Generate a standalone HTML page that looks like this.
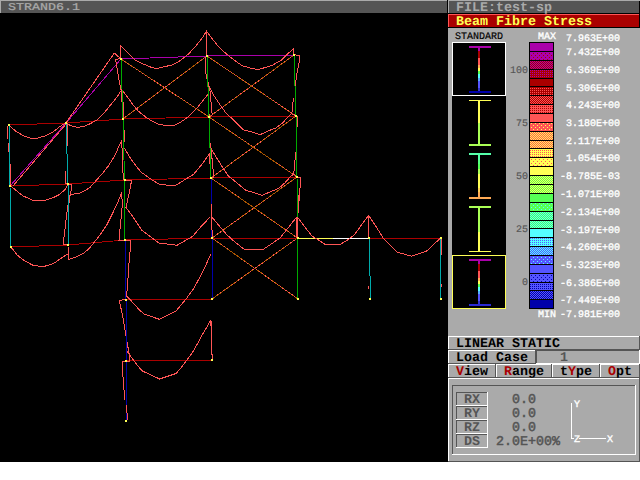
<!DOCTYPE html>
<html><head><meta charset="utf-8"><title>STRAND6.1</title>
<style>html,body{margin:0;padding:0;background:#fff;overflow:hidden}svg{display:block}
text{font-family:"Liberation Mono",monospace;white-space:pre}</style></head>
<body><svg width="640" height="480" viewBox="0 0 640 480" shape-rendering="crispEdges">
<defs><pattern id="p1" width="4" height="4" patternUnits="userSpaceOnUse"><rect x="1" y="1" width="1" height="1" fill="#AA0000"/><rect x="3" y="3" width="1" height="1" fill="#AA0000"/></pattern><pattern id="p2" width="2" height="2" patternUnits="userSpaceOnUse"><rect x="0" y="0" width="1" height="1" fill="#AA0000"/><rect x="1" y="1" width="1" height="1" fill="#AA0000"/></pattern><pattern id="p3" width="2" height="2" patternUnits="userSpaceOnUse"><rect x="0" y="0" width="1" height="1" fill="#AA00AA"/></pattern><pattern id="p5" width="2" height="2" patternUnits="userSpaceOnUse"><rect x="0" y="0" width="1" height="1" fill="#FF5555"/></pattern><pattern id="p6" width="2" height="2" patternUnits="userSpaceOnUse"><rect x="0" y="0" width="1" height="1" fill="#FF5555"/><rect x="1" y="1" width="1" height="1" fill="#FF5555"/></pattern><pattern id="p7" width="2" height="2" patternUnits="userSpaceOnUse"><rect x="0" y="0" width="1" height="1" fill="#AA0000"/></pattern><pattern id="p9" width="4" height="4" patternUnits="userSpaceOnUse"><rect x="1" y="1" width="1" height="1" fill="#FFFF55"/><rect x="3" y="3" width="1" height="1" fill="#FFFF55"/></pattern><pattern id="p10" width="2" height="2" patternUnits="userSpaceOnUse"><rect x="0" y="0" width="1" height="1" fill="#FFFF55"/><rect x="1" y="1" width="1" height="1" fill="#FFFF55"/></pattern><pattern id="p11" width="2" height="2" patternUnits="userSpaceOnUse"><rect x="0" y="0" width="1" height="1" fill="#FF5555"/><rect x="1" y="1" width="1" height="1" fill="#FF5555"/></pattern><pattern id="p12" width="2" height="2" patternUnits="userSpaceOnUse"><rect x="0" y="0" width="1" height="1" fill="#FF5555"/></pattern><pattern id="p13" width="4" height="4" patternUnits="userSpaceOnUse"><rect x="1" y="1" width="1" height="1" fill="#FF5555"/><rect x="3" y="3" width="1" height="1" fill="#FF5555"/></pattern><pattern id="p15" width="2" height="2" patternUnits="userSpaceOnUse"><rect x="0" y="0" width="1" height="1" fill="#55FF55"/><rect x="1" y="1" width="1" height="1" fill="#55FF55"/></pattern><pattern id="p16" width="2" height="2" patternUnits="userSpaceOnUse"><rect x="0" y="0" width="1" height="1" fill="#FFFF55"/><rect x="1" y="1" width="1" height="1" fill="#FFFF55"/></pattern><pattern id="p18" width="4" height="4" patternUnits="userSpaceOnUse"><rect x="1" y="1" width="1" height="1" fill="#55FFFF"/><rect x="3" y="3" width="1" height="1" fill="#55FFFF"/></pattern><pattern id="p19" width="2" height="2" patternUnits="userSpaceOnUse"><rect x="0" y="0" width="1" height="1" fill="#55FFFF"/><rect x="1" y="1" width="1" height="1" fill="#55FFFF"/></pattern><pattern id="p20" width="2" height="2" patternUnits="userSpaceOnUse"><rect x="0" y="0" width="1" height="1" fill="#55FF55"/><rect x="1" y="1" width="1" height="1" fill="#55FF55"/></pattern><pattern id="p22" width="2" height="2" patternUnits="userSpaceOnUse"><rect x="0" y="0" width="1" height="1" fill="#5555FF"/></pattern><pattern id="p23" width="2" height="2" patternUnits="userSpaceOnUse"><rect x="0" y="0" width="1" height="1" fill="#55FFFF"/><rect x="1" y="1" width="1" height="1" fill="#55FFFF"/></pattern><pattern id="p24" width="4" height="4" patternUnits="userSpaceOnUse"><rect x="1" y="1" width="1" height="1" fill="#55FFFF"/><rect x="3" y="3" width="1" height="1" fill="#55FFFF"/></pattern><pattern id="p26" width="4" height="4" patternUnits="userSpaceOnUse"><rect x="1" y="1" width="1" height="1" fill="#0000AA"/><rect x="3" y="3" width="1" height="1" fill="#0000AA"/></pattern><pattern id="p27" width="2" height="2" patternUnits="userSpaceOnUse"><rect x="0" y="0" width="1" height="1" fill="#0000AA"/></pattern><pattern id="p28" width="2" height="2" patternUnits="userSpaceOnUse"><rect x="0" y="0" width="1" height="1" fill="#5555FF"/><rect x="1" y="1" width="1" height="1" fill="#5555FF"/></pattern></defs>
<rect x="0" y="0" width="640" height="480" fill="#FFFFFF"/>
<rect x="0" y="0" width="448" height="462" fill="#000000"/>
<rect x="0" y="0" width="447" height="13" fill="#555555"/>
<rect x="0" y="0" width="447" height="1" fill="#AAAAAA"/>
<rect x="0" y="0" width="1" height="13" fill="#AAAAAA"/>
<rect x="448" y="0" width="192" height="462" fill="#AAAAAA"/>
<rect x="449" y="0" width="191" height="13" fill="#555555"/>
<rect x="448" y="0" width="192" height="1" fill="#AAAAAA"/>
<rect x="448" y="0" width="1" height="13" fill="#AAAAAA"/>
<rect x="448" y="13" width="192" height="1" fill="#000000"/>
<rect x="448" y="14" width="192" height="13" fill="#AA0000"/>
<rect x="448" y="14" width="192" height="1" fill="#FF5555"/>
<rect x="448" y="14" width="1" height="13" fill="#FF5555"/>
<rect x="639" y="1" width="1" height="27" fill="#000000"/>
<rect x="448" y="27" width="192" height="1" fill="#000000"/>
<rect x="452" y="42" width="54" height="267" fill="#000000"/>
<rect x="452" y="42" width="54" height="1" fill="#FFFFFF"/>
<rect x="452" y="95" width="54" height="1" fill="#FFFFFF"/>
<rect x="452" y="42" width="1" height="54" fill="#FFFFFF"/>
<rect x="505" y="42" width="1" height="54" fill="#FFFFFF"/>
<rect x="452" y="255" width="54" height="1" fill="#FFFF55"/>
<rect x="452" y="308" width="54" height="1" fill="#FFFF55"/>
<rect x="452" y="255" width="1" height="54" fill="#FFFF55"/>
<rect x="505" y="255" width="1" height="54" fill="#FFFF55"/>
<rect x="469" y="46" width="22" height="2" fill="#AA00AA"/>
<rect x="469" y="91" width="22" height="2" fill="#0000AA"/>
<rect x="478" y="48" width="2" height="3" fill="#AA00AA"/>
<rect x="478" y="51" width="2" height="4" fill="#AA0000"/>
<rect x="478" y="55" width="2" height="3" fill="#AA0000"/>
<rect x="478" y="58" width="2" height="3" fill="#FF5555"/>
<rect x="478" y="61" width="2" height="4" fill="#FF5555"/>
<rect x="478" y="65" width="2" height="3" fill="#FFAA55"/>
<rect x="478" y="68" width="2" height="3" fill="#FFFF55"/>
<rect x="478" y="71" width="2" height="3" fill="#55FF55"/>
<rect x="478" y="74" width="2" height="4" fill="#55FFFF"/>
<rect x="478" y="78" width="2" height="3" fill="#55AAFF"/>
<rect x="478" y="81" width="2" height="3" fill="#5555FF"/>
<rect x="478" y="84" width="2" height="4" fill="#5555FF"/>
<rect x="478" y="88" width="2" height="3" fill="#3333CC"/>
<rect x="469" y="100" width="22" height="1" fill="#FFFF55"/>
<rect x="469" y="144" width="22" height="2" fill="#AAFF55"/>
<rect x="478" y="101" width="2" height="4" fill="#FFFF55"/>
<rect x="478" y="105" width="2" height="5" fill="#FFFF55"/>
<rect x="478" y="110" width="2" height="4" fill="#FFFF55"/>
<rect x="478" y="114" width="2" height="4" fill="#FFFF55"/>
<rect x="478" y="118" width="2" height="5" fill="#FFFF55"/>
<rect x="478" y="123" width="2" height="4" fill="#AAFF55"/>
<rect x="478" y="127" width="2" height="4" fill="#AAFF55"/>
<rect x="478" y="131" width="2" height="4" fill="#AAFF55"/>
<rect x="478" y="135" width="2" height="5" fill="#AAFF55"/>
<rect x="478" y="140" width="2" height="4" fill="#AAFF55"/>
<rect x="469" y="153" width="22" height="2" fill="#55FFAA"/>
<rect x="469" y="197" width="22" height="2" fill="#FFAA55"/>
<rect x="478" y="155" width="2" height="5" fill="#55FFAA"/>
<rect x="478" y="160" width="2" height="4" fill="#55FF80"/>
<rect x="478" y="164" width="2" height="5" fill="#55FF55"/>
<rect x="478" y="169" width="2" height="5" fill="#AAFF55"/>
<rect x="478" y="174" width="2" height="4" fill="#FFFF55"/>
<rect x="478" y="178" width="2" height="5" fill="#FFFF55"/>
<rect x="478" y="183" width="2" height="5" fill="#FFFF55"/>
<rect x="478" y="188" width="2" height="4" fill="#FFD055"/>
<rect x="478" y="192" width="2" height="5" fill="#FFAA55"/>
<rect x="469" y="206" width="22" height="2" fill="#AAFF55"/>
<rect x="469" y="251" width="22" height="1" fill="#FFFF55"/>
<rect x="478" y="208" width="2" height="5" fill="#AAFF55"/>
<rect x="478" y="213" width="2" height="5" fill="#AAFF55"/>
<rect x="478" y="218" width="2" height="4" fill="#AAFF55"/>
<rect x="478" y="222" width="2" height="5" fill="#AAFF55"/>
<rect x="478" y="227" width="2" height="5" fill="#AAFF55"/>
<rect x="478" y="232" width="2" height="5" fill="#FFFF55"/>
<rect x="478" y="237" width="2" height="4" fill="#FFFF55"/>
<rect x="478" y="241" width="2" height="5" fill="#FFFF55"/>
<rect x="478" y="246" width="2" height="5" fill="#FFFF55"/>
<rect x="469" y="259" width="22" height="2" fill="#AA00AA"/>
<rect x="469" y="304" width="22" height="2" fill="#2A2AD4"/>
<rect x="478" y="261" width="2" height="3" fill="#AA00AA"/>
<rect x="478" y="264" width="2" height="4" fill="#AA0000"/>
<rect x="478" y="268" width="2" height="3" fill="#AA0000"/>
<rect x="478" y="271" width="2" height="3" fill="#FF5555"/>
<rect x="478" y="274" width="2" height="4" fill="#FF5555"/>
<rect x="478" y="278" width="2" height="3" fill="#FFAA55"/>
<rect x="478" y="281" width="2" height="3" fill="#FFFF55"/>
<rect x="478" y="284" width="2" height="3" fill="#55FF55"/>
<rect x="478" y="287" width="2" height="4" fill="#55FFFF"/>
<rect x="478" y="291" width="2" height="3" fill="#55AAFF"/>
<rect x="478" y="294" width="2" height="3" fill="#5555FF"/>
<rect x="478" y="297" width="2" height="4" fill="#5555FF"/>
<rect x="478" y="301" width="2" height="3" fill="#3333CC"/>
<rect x="529" y="42" width="25" height="267" fill="#000000"/>
<rect x="530" y="43" width="23" height="8" fill="#AA00AA"/>
<rect x="530" y="52" width="23" height="8" fill="#AA00AA"/>
<rect x="530" y="52" width="23" height="8" fill="url(#p1)"/>
<rect x="530" y="61" width="23" height="8" fill="#AA00AA"/>
<rect x="530" y="61" width="23" height="8" fill="url(#p2)"/>
<rect x="530" y="70" width="23" height="8" fill="#AA0000"/>
<rect x="530" y="70" width="23" height="8" fill="url(#p3)"/>
<rect x="530" y="79" width="23" height="7" fill="#AA0000"/>
<rect x="530" y="87" width="23" height="8" fill="#AA0000"/>
<rect x="530" y="87" width="23" height="8" fill="url(#p5)"/>
<rect x="530" y="96" width="23" height="8" fill="#AA0000"/>
<rect x="530" y="96" width="23" height="8" fill="url(#p6)"/>
<rect x="530" y="105" width="23" height="8" fill="#FF5555"/>
<rect x="530" y="105" width="23" height="8" fill="url(#p7)"/>
<rect x="530" y="114" width="23" height="8" fill="#FF5555"/>
<rect x="530" y="123" width="23" height="8" fill="#FF5555"/>
<rect x="530" y="123" width="23" height="8" fill="url(#p9)"/>
<rect x="530" y="132" width="23" height="8" fill="#FF5555"/>
<rect x="530" y="132" width="23" height="8" fill="url(#p10)"/>
<rect x="530" y="141" width="23" height="7" fill="#FFFF55"/>
<rect x="530" y="141" width="23" height="7" fill="url(#p11)"/>
<rect x="530" y="149" width="23" height="8" fill="#FFFF55"/>
<rect x="530" y="149" width="23" height="8" fill="url(#p12)"/>
<rect x="530" y="158" width="23" height="8" fill="#FFFF55"/>
<rect x="530" y="158" width="23" height="8" fill="url(#p13)"/>
<rect x="530" y="167" width="23" height="8" fill="#FFFF55"/>
<rect x="530" y="176" width="23" height="8" fill="#FFFF55"/>
<rect x="530" y="176" width="23" height="8" fill="url(#p15)"/>
<rect x="530" y="185" width="23" height="8" fill="#55FF55"/>
<rect x="530" y="185" width="23" height="8" fill="url(#p16)"/>
<rect x="530" y="194" width="23" height="8" fill="#55FF55"/>
<rect x="530" y="203" width="23" height="8" fill="#55FF55"/>
<rect x="530" y="203" width="23" height="8" fill="url(#p18)"/>
<rect x="530" y="212" width="23" height="8" fill="#55FF55"/>
<rect x="530" y="212" width="23" height="8" fill="url(#p19)"/>
<rect x="530" y="221" width="23" height="7" fill="#55FFFF"/>
<rect x="530" y="221" width="23" height="7" fill="url(#p20)"/>
<rect x="530" y="229" width="23" height="8" fill="#55FFFF"/>
<rect x="530" y="238" width="23" height="8" fill="#55FFFF"/>
<rect x="530" y="238" width="23" height="8" fill="url(#p22)"/>
<rect x="530" y="247" width="23" height="8" fill="#5555FF"/>
<rect x="530" y="247" width="23" height="8" fill="url(#p23)"/>
<rect x="530" y="256" width="23" height="8" fill="#5555FF"/>
<rect x="530" y="256" width="23" height="8" fill="url(#p24)"/>
<rect x="530" y="265" width="23" height="8" fill="#5555FF"/>
<rect x="530" y="274" width="23" height="8" fill="#5555FF"/>
<rect x="530" y="274" width="23" height="8" fill="url(#p26)"/>
<rect x="530" y="283" width="23" height="7" fill="#5555FF"/>
<rect x="530" y="283" width="23" height="7" fill="url(#p27)"/>
<rect x="530" y="291" width="23" height="8" fill="#0000AA"/>
<rect x="530" y="291" width="23" height="8" fill="url(#p28)"/>
<rect x="530" y="300" width="23" height="8" fill="#0000AA"/>
<rect x="448" y="336" width="192" height="1" fill="#FFFFFF"/>
<rect x="448" y="336" width="1" height="14" fill="#FFFFFF"/>
<rect x="448" y="349" width="192" height="1" fill="#555555"/>
<rect x="639" y="336" width="1" height="14" fill="#555555"/>
<rect x="448" y="350" width="88" height="1" fill="#FFFFFF"/>
<rect x="448" y="350" width="1" height="14" fill="#FFFFFF"/>
<rect x="448" y="363" width="88" height="1" fill="#555555"/>
<rect x="535" y="350" width="1" height="14" fill="#555555"/>
<rect x="536" y="350" width="104" height="1" fill="#555555"/>
<rect x="536" y="350" width="1" height="14" fill="#555555"/>
<rect x="536" y="363" width="104" height="1" fill="#FFFFFF"/>
<rect x="639" y="350" width="1" height="14" fill="#FFFFFF"/>
<rect x="448" y="364" width="48" height="1" fill="#FFFFFF"/>
<rect x="448" y="364" width="1" height="14" fill="#FFFFFF"/>
<rect x="448" y="377" width="48" height="1" fill="#555555"/>
<rect x="495" y="364" width="1" height="14" fill="#555555"/>
<rect x="496" y="364" width="56" height="1" fill="#FFFFFF"/>
<rect x="496" y="364" width="1" height="14" fill="#FFFFFF"/>
<rect x="496" y="377" width="56" height="1" fill="#555555"/>
<rect x="551" y="364" width="1" height="14" fill="#555555"/>
<rect x="552" y="364" width="48" height="1" fill="#FFFFFF"/>
<rect x="552" y="364" width="1" height="14" fill="#FFFFFF"/>
<rect x="552" y="377" width="48" height="1" fill="#555555"/>
<rect x="599" y="364" width="1" height="14" fill="#555555"/>
<rect x="600" y="364" width="40" height="1" fill="#FFFFFF"/>
<rect x="600" y="364" width="1" height="14" fill="#FFFFFF"/>
<rect x="600" y="377" width="40" height="1" fill="#555555"/>
<rect x="639" y="364" width="1" height="14" fill="#555555"/>
<rect x="448" y="378" width="192" height="1" fill="#FFFFFF"/>
<rect x="448" y="378" width="1" height="84" fill="#FFFFFF"/>
<rect x="448" y="461" width="192" height="1" fill="#555555"/>
<rect x="639" y="378" width="1" height="84" fill="#555555"/>
<rect x="452" y="385" width="184" height="1" fill="#555555"/>
<rect x="452" y="385" width="1" height="70" fill="#555555"/>
<rect x="452" y="454" width="184" height="1" fill="#FFFFFF"/>
<rect x="635" y="385" width="1" height="70" fill="#FFFFFF"/>
<rect x="456" y="392" width="32" height="1" fill="#555555"/>
<rect x="456" y="392" width="1" height="14" fill="#555555"/>
<rect x="456" y="405" width="32" height="1" fill="#FFFFFF"/>
<rect x="487" y="392" width="1" height="14" fill="#FFFFFF"/>
<rect x="456" y="406" width="32" height="1" fill="#555555"/>
<rect x="456" y="406" width="1" height="14" fill="#555555"/>
<rect x="456" y="419" width="32" height="1" fill="#FFFFFF"/>
<rect x="487" y="406" width="1" height="14" fill="#FFFFFF"/>
<rect x="456" y="420" width="32" height="1" fill="#555555"/>
<rect x="456" y="420" width="1" height="14" fill="#555555"/>
<rect x="456" y="433" width="32" height="1" fill="#FFFFFF"/>
<rect x="487" y="420" width="1" height="14" fill="#FFFFFF"/>
<rect x="456" y="434" width="32" height="1" fill="#555555"/>
<rect x="456" y="434" width="1" height="14" fill="#555555"/>
<rect x="456" y="447" width="32" height="1" fill="#FFFFFF"/>
<rect x="487" y="434" width="1" height="14" fill="#FFFFFF"/>
<rect x="571" y="403" width="1" height="36" fill="#FFFFFF"/>
<rect x="571" y="438" width="3" height="1" fill="#FFFFFF"/>
<rect x="579" y="438" width="27" height="1" fill="#FFFFFF"/>
<line x1="121" y1="59" x2="209" y2="117" stroke="#AA5500" stroke-width="1"/>
<line x1="121" y1="59" x2="209" y2="117" stroke="#FF5555" stroke-width="1" stroke-dasharray="1.2 2.4"/>
<line x1="207" y1="56" x2="123" y2="119" stroke="#AA5500" stroke-width="1"/>
<line x1="207" y1="56" x2="123" y2="119" stroke="#FF5555" stroke-width="1" stroke-dasharray="1.2 2.4"/>
<line x1="207" y1="56" x2="296" y2="116" stroke="#AA5500" stroke-width="1"/>
<line x1="207" y1="56" x2="296" y2="116" stroke="#FF5555" stroke-width="1" stroke-dasharray="1.2 2.4"/>
<line x1="294" y1="55" x2="209" y2="117" stroke="#AA5500" stroke-width="1"/>
<line x1="294" y1="55" x2="209" y2="117" stroke="#FF5555" stroke-width="1" stroke-dasharray="1.2 2.4"/>
<line x1="209" y1="117" x2="297" y2="177" stroke="#AA5500" stroke-width="1"/>
<line x1="209" y1="117" x2="297" y2="177" stroke="#FF5555" stroke-width="1" stroke-dasharray="1.2 2.4"/>
<line x1="296" y1="116" x2="211" y2="178" stroke="#AA5500" stroke-width="1"/>
<line x1="296" y1="116" x2="211" y2="178" stroke="#FF5555" stroke-width="1" stroke-dasharray="1.2 2.4"/>
<line x1="211" y1="178" x2="297.5" y2="238" stroke="#AA5500" stroke-width="1"/>
<line x1="211" y1="178" x2="297.5" y2="238" stroke="#FF5555" stroke-width="1" stroke-dasharray="1.2 2.4"/>
<line x1="297" y1="177" x2="212" y2="238" stroke="#AA5500" stroke-width="1"/>
<line x1="297" y1="177" x2="212" y2="238" stroke="#FF5555" stroke-width="1" stroke-dasharray="1.2 2.4"/>
<line x1="212" y1="238" x2="298" y2="299" stroke="#AA5500" stroke-width="1"/>
<line x1="212" y1="238" x2="298" y2="299" stroke="#FF5555" stroke-width="1" stroke-dasharray="1.2 2.4"/>
<line x1="297.5" y1="238" x2="212" y2="299" stroke="#AA5500" stroke-width="1"/>
<line x1="297.5" y1="238" x2="212" y2="299" stroke="#FF5555" stroke-width="1" stroke-dasharray="1.2 2.4"/>
<line x1="9" y1="125" x2="66" y2="123" stroke="#AA0000" stroke-width="1"/>
<line x1="66" y1="123" x2="123" y2="119" stroke="#AA0000" stroke-width="1"/>
<line x1="123" y1="119" x2="209" y2="117" stroke="#AA0000" stroke-width="1"/>
<line x1="209" y1="117" x2="296" y2="116" stroke="#AA0000" stroke-width="1"/>
<line x1="10" y1="186" x2="68" y2="184" stroke="#AA0000" stroke-width="1"/>
<line x1="68" y1="184" x2="124.5" y2="180" stroke="#AA0000" stroke-width="1"/>
<line x1="124.5" y1="180" x2="211" y2="178" stroke="#AA0000" stroke-width="1"/>
<line x1="211" y1="178" x2="297" y2="177" stroke="#AA0000" stroke-width="1"/>
<line x1="10.75" y1="247" x2="68" y2="245" stroke="#AA0000" stroke-width="1"/>
<line x1="68" y1="245" x2="125" y2="240" stroke="#AA0000" stroke-width="1"/>
<line x1="125" y1="240" x2="212" y2="238" stroke="#AA0000" stroke-width="1"/>
<line x1="212" y1="238" x2="297.5" y2="238" stroke="#AA0000" stroke-width="1"/>
<line x1="369" y1="238" x2="441" y2="238" stroke="#AA0000" stroke-width="1"/>
<line x1="126" y1="300" x2="212" y2="299" stroke="#AA0000" stroke-width="1"/>
<line x1="126" y1="361" x2="212" y2="360" stroke="#AA0000" stroke-width="1"/>
<line x1="297.5" y1="238" x2="333" y2="238" stroke="#FFFF55" stroke-width="1"/>
<line x1="333" y1="238" x2="369" y2="238" stroke="#FFFFFF" stroke-width="1"/>
<line x1="10" y1="186" x2="66" y2="123" stroke="#AA00AA" stroke-width="1"/>
<line x1="66" y1="123" x2="121" y2="59" stroke="#AA00AA" stroke-width="1"/>
<line x1="121" y1="59" x2="207" y2="56" stroke="#AA00AA" stroke-width="1"/>
<line x1="207" y1="56" x2="294" y2="55" stroke="#AA00AA" stroke-width="1"/>
<polyline points="13,186 66.5,123.5" fill="none" stroke="#FF5555" stroke-width="1"/>
<polyline points="65.9,123 114.3,53.1 120.6,58.6" fill="none" stroke="#FF5555" stroke-width="1"/>
<polyline points="120.6,58.6 115.6,59.5 119,79.7 121.3,91 123.1,118.9" fill="none" stroke="#FF5555" stroke-width="1"/>
<polyline points="121.25,85 121.25,90.5" fill="none" stroke="#FF5555" stroke-width="1"/>
<polyline points="123.6,102 123.6,124" fill="none" stroke="#FF5555" stroke-width="1"/>
<polyline points="120.6,58.6 120.1,45.3 127.6,52.3 135.4,60.2 143.25,64 151,67.2 156.5,68.75 163.6,66.9 172.9,64.8 180.75,60.2 188.6,53.9 196.4,45.3 202.6,37.5 206.3,31.25 206.8,56.25" fill="none" stroke="#FF5555" stroke-width="1"/>
<polyline points="206.4,31.25 212.4,39 218.6,46.9 226.4,53.9 234.25,60.2 242,65.6 249.9,68 257.7,69.5 265.5,67.5 273.3,64.8 281.1,60.2 287.4,53.9 293.3,49.2 293.9,54.7" fill="none" stroke="#FF5555" stroke-width="1"/>
<polyline points="205.3,57 206.1,76 208.1,82.5 210,91 212.2,115 209.1,117.2" fill="none" stroke="#FF5555" stroke-width="1"/>
<polyline points="293.9,54.7 299.6,55.5 299.6,60.2 297.5,70.3 296,79.7 295.2,98.4" fill="none" stroke="#FF5555" stroke-width="1"/>
<polyline points="293.5,98 292.75,104.4 291.9,113.75 295.6,116" fill="none" stroke="#FF5555" stroke-width="1"/>
<polyline points="8.9,125.2 15.6,131.1 23.4,135.8 31.25,138.4 37.5,138.1 45.3,135.8 53.1,131.9 59.4,126.9 64.8,123.3" fill="none" stroke="#FF5555" stroke-width="1"/>
<polyline points="7.5,126.4 7.5,139" fill="none" stroke="#FF5555" stroke-width="1"/>
<polyline points="8.6,142.8 8.6,152" fill="none" stroke="#FF5555" stroke-width="1"/>
<polyline points="67.3,124 67.5,146" fill="none" stroke="#FF5555" stroke-width="1"/>
<polyline points="65.8,123 68.1,124.4 72.8,126.4 78.3,127.5 85.3,125.9 91.6,123 97.8,119.4 104,113.1 110.3,105.3 116.6,97.5 121.25,90.5" fill="none" stroke="#FF5555" stroke-width="1"/>
<polyline points="122,89.7 127.5,97.2 133.75,105.8 138.4,111.25 146.25,117.5 152.5,121.4 158.75,124.5 168.1,125.6 174.4,125.3 180.6,122.2 188.4,116.7 196.25,108.9 202.5,101.1 208.4,93.75 209.1,117.2" fill="none" stroke="#FF5555" stroke-width="1"/>
<polyline points="208.9,117.2 208.9,86.25 213.9,95.6 220.2,105 226.4,113.6 234.25,120.6 243.6,130 251.4,131.9 260,134.7 268.6,130.8 276.4,127.7 282.7,123 287.4,117.5 291.9,113" fill="none" stroke="#FF5555" stroke-width="1"/>
<polyline points="295.6,116 297.5,116.5 297.5,126.25 296.25,127.5 296.25,148.75" fill="none" stroke="#FF5555" stroke-width="1"/>
<polyline points="295.6,151.9 294.75,163.75 293.75,173.75 296.9,176.9" fill="none" stroke="#FF5555" stroke-width="1"/>
<polyline points="10.8,164 10.9,186" fill="none" stroke="#FF5555" stroke-width="1"/>
<polyline points="10.2,185.9 11.7,186.7 17.2,191.4 23.4,196.1 32.8,200.3 45.3,200.3 53.1,197.7 59.4,194.5 65.6,189 68,183.9 71.6,184.7 70.6,195.3 67.5,195.3" fill="none" stroke="#FF5555" stroke-width="1"/>
<polyline points="65.3,171 65.3,184 68,183.9" fill="none" stroke="#FF5555" stroke-width="1"/>
<polyline points="70.9,194.5 80.3,193 89.7,187.8 95.9,180.8 102.2,173.75 108.4,165.9 114.7,155.8 121.7,140.2 122.5,160 123.3,180" fill="none" stroke="#FF5555" stroke-width="1"/>
<polyline points="124,130 124,141.7" fill="none" stroke="#FF5555" stroke-width="1"/>
<polyline points="124.5,148 130.3,158.1 136.6,166.7 141.25,172.2 149.7,178.4 159,184.2 170,185.5 176.25,185 185.6,179.2 193.4,174.5 201.25,165.2 209.8,153.4 210.3,178.4" fill="none" stroke="#FF5555" stroke-width="1"/>
<polyline points="210.6,143.5 213.75,177 210.9,178.1" fill="none" stroke="#FF5555" stroke-width="1"/>
<polyline points="210.7,148 215.9,156.6 222.2,166.7 228.4,176.1 236.25,182.3 245.6,190.2 253.4,192.5 262,195.3 270.6,191.7 278.4,188.6 284.7,183.1 290.2,176.9 293.75,173.75" fill="none" stroke="#FF5555" stroke-width="1"/>
<polyline points="296.9,176.9 300.6,177.25 300.6,187.5 299.4,189 299.4,200 298.5,201 298.5,212" fill="none" stroke="#FF5555" stroke-width="1"/>
<polyline points="10.9,246.9 17.2,255 23.4,260 32.8,265.2 40.6,266.4 46.9,265.9 54.7,262.8 62.5,257.3 67.5,254.2" fill="none" stroke="#FF5555" stroke-width="1"/>
<polyline points="69.5,195.3 68.4,213.3" fill="none" stroke="#FF5555" stroke-width="1"/>
<polyline points="67.8,205.3 63.1,244.8 67.8,244.8" fill="none" stroke="#FF5555" stroke-width="1"/>
<polyline points="68,245 68.2,259.7 75,257.3 82.8,253.75 89,248.75 94.4,242 100.6,234.2 106.9,224.8 113.1,212.3 117.8,202.2 121.7,192.5 122.3,205 119,240 124.8,240" fill="none" stroke="#FF5555" stroke-width="1"/>
<polyline points="124.7,180 131.6,180.3 129.5,192 125.9,207.5 132.5,216.1 141.9,230.2 151.25,237.2 159,243.1 168.4,244.2 177,245.3 185.6,240.3 192.7,236.4 201.25,226.25 210.3,216.9" fill="none" stroke="#FF5555" stroke-width="1"/>
<polyline points="212.1,217.3 219,225.5 226.9,234.8 234.7,241.9 244.8,249.7 262.8,249.7 272.2,243.4 280,238 286.25,230.2 292.5,222.3 297.2,216.7" fill="none" stroke="#FF5555" stroke-width="1"/>
<polyline points="297,216.4 304,225.8 311.9,236 318.1,239.8 325.2,244.5 340,244.5 347.8,239.8 354,235.2 360.3,226.6 368.6,215.4 368.9,238" fill="none" stroke="#FF5555" stroke-width="1"/>
<polyline points="368.6,215.5 375.6,225.8 383.4,238.3 391.25,246.1 397.5,252.3 411.6,256.25 427.2,250.8 433.4,244.5 440.5,238.3" fill="none" stroke="#FF5555" stroke-width="1"/>
<polyline points="124.75,240 131,240.6 129,263 127.75,282 126.6,296 131.9,301.6 139.4,310 144,314 159.6,319.4 176,311 180.7,305.3 186.25,298.75 193.75,288.4 199.4,278.1 205,266.9 211,253.75" fill="none" stroke="#FF5555" stroke-width="1"/>
<polyline points="125.7,299.7 119.1,300.25 122.5,315 124.75,328 127.2,343 129.6,356.25 130,361 121.6,361.5" fill="none" stroke="#FF5555" stroke-width="1"/>
<polyline points="122.5,361.75 122.9,375 123.75,387 125,400" fill="none" stroke="#FF5555" stroke-width="1"/>
<polyline points="126.5,405 127.5,420" fill="none" stroke="#FF5555" stroke-width="1"/>
<polyline points="126.25,350.6 131.9,358 137.5,365.6 142.2,370.9 159.6,379 176,373.5 180.7,368.4 187.2,359.6 193.75,350.6 201.25,336.6 210.8,320.25 212.2,360" fill="none" stroke="#FF5555" stroke-width="1"/>
<line x1="9" y1="125" x2="10" y2="186" stroke="#00AAAA" stroke-width="1"/>
<line x1="10" y1="186" x2="10.75" y2="247" stroke="#00AAAA" stroke-width="1"/>
<line x1="66" y1="123" x2="68" y2="184" stroke="#00AAAA" stroke-width="1"/>
<line x1="68" y1="184" x2="68" y2="245" stroke="#00AAAA" stroke-width="1"/>
<line x1="369.4" y1="238" x2="370.4" y2="299" stroke="#00AAAA" stroke-width="1"/>
<line x1="440.5" y1="238" x2="440.5" y2="299" stroke="#00AAAA" stroke-width="1"/>
<line x1="121" y1="59" x2="123" y2="119" stroke="#00AA00" stroke-width="1"/>
<line x1="123" y1="119" x2="124.5" y2="180" stroke="#00AA00" stroke-width="1"/>
<line x1="124.5" y1="180" x2="125" y2="240" stroke="#00AA00" stroke-width="1"/>
<line x1="207" y1="56" x2="209" y2="117" stroke="#00AA00" stroke-width="1"/>
<line x1="209" y1="117" x2="211" y2="178" stroke="#00AA00" stroke-width="1"/>
<line x1="294" y1="55" x2="296" y2="116" stroke="#00AA00" stroke-width="1"/>
<line x1="296" y1="116" x2="297" y2="177" stroke="#00AA00" stroke-width="1"/>
<line x1="297" y1="177" x2="297.5" y2="238" stroke="#00AA00" stroke-width="1"/>
<line x1="297.5" y1="238" x2="298" y2="299" stroke="#00AA00" stroke-width="1"/>
<line x1="125" y1="240" x2="126" y2="300" stroke="#0000AA" stroke-width="1"/>
<line x1="126" y1="300" x2="126" y2="361" stroke="#0000AA" stroke-width="1"/>
<line x1="126" y1="361" x2="126" y2="420.5" stroke="#0000AA" stroke-width="1"/>
<line x1="211" y1="178" x2="212" y2="238" stroke="#0000AA" stroke-width="1"/>
<line x1="212" y1="238" x2="212" y2="299" stroke="#0000AA" stroke-width="1"/>
<polyline points="211.4,204.4 212.2,238" fill="none" stroke="#FF5555" stroke-width="1"/>
<polyline points="368.8,215.5 368.9,238" fill="none" stroke="#FF5555" stroke-width="1"/>
<polyline points="211,320.5 212.2,360" fill="none" stroke="#FF5555" stroke-width="1"/>
<polyline points="441.5,239 441.5,254.7" fill="none" stroke="#FF5555" stroke-width="1"/>
<polyline points="441.5,284 441.5,287" fill="none" stroke="#FF5555" stroke-width="1"/>
<polyline points="368.6,286 368.6,289" fill="none" stroke="#FF5555" stroke-width="1"/>
<polyline points="122.5,361.75 122.9,375 123.75,387 125,400" fill="none" stroke="#FF5555" stroke-width="1"/>
<polyline points="126.5,405 127.5,420" fill="none" stroke="#FF5555" stroke-width="1"/>
<polyline points="298.5,195 298.5,212.5" fill="none" stroke="#FF5555" stroke-width="1"/>
<line x1="297" y1="216.5" x2="297" y2="238" stroke="#FF5555" stroke-width="2"/>
<rect x="120" y="58" width="2" height="2" fill="#FFFF55"/>
<rect x="206" y="55" width="2" height="2" fill="#FFFF55"/>
<rect x="293" y="54" width="2" height="2" fill="#FFFF55"/>
<rect x="8" y="124" width="2" height="2" fill="#FFFF55"/>
<rect x="65" y="122" width="2" height="2" fill="#FFFF55"/>
<rect x="122" y="118" width="2" height="2" fill="#FFFF55"/>
<rect x="208" y="116" width="2" height="2" fill="#FFFF55"/>
<rect x="295" y="115" width="2" height="2" fill="#FFFF55"/>
<rect x="9" y="185" width="2" height="2" fill="#FFFF55"/>
<rect x="67" y="183" width="2" height="2" fill="#FFFF55"/>
<rect x="124" y="179" width="2" height="2" fill="#FFFF55"/>
<rect x="210" y="177" width="2" height="2" fill="#FFFF55"/>
<rect x="296" y="176" width="2" height="2" fill="#FFFF55"/>
<rect x="10" y="246" width="2" height="2" fill="#FFFF55"/>
<rect x="67" y="244" width="2" height="2" fill="#FFFF55"/>
<rect x="124" y="239" width="2" height="2" fill="#FFFF55"/>
<rect x="211" y="237" width="2" height="2" fill="#FFFF55"/>
<rect x="297" y="237" width="2" height="2" fill="#FFFF55"/>
<rect x="368" y="237" width="2" height="2" fill="#FFFF55"/>
<rect x="440" y="237" width="2" height="2" fill="#FFFF55"/>
<rect x="125" y="299" width="2" height="2" fill="#FFFF55"/>
<rect x="211" y="298" width="2" height="2" fill="#FFFF55"/>
<rect x="297" y="298" width="2" height="2" fill="#FFFF55"/>
<rect x="369" y="298" width="2" height="2" fill="#FFFF55"/>
<rect x="440" y="298" width="2" height="2" fill="#FFFF55"/>
<rect x="125" y="360" width="2" height="2" fill="#FFFF55"/>
<rect x="211" y="359" width="2" height="2" fill="#FFFF55"/>
<rect x="125" y="420" width="2" height="2" fill="#FFFF55"/>
<g text-rendering="geometricPrecision">
<text transform="translate(8,10) scale(1,0.78)" font-size="13.333px" fill="#AAAAAA" stroke="#AAAAAA" stroke-width="0.3">STRAND6.1</text>
<text x="456" y="11" font-size="13.333px" font-weight="bold" fill="#AAAAAA">FILE:test-sp</text>
<text x="456" y="25" font-size="13.333px" font-weight="bold" fill="#FFFF55">Beam Fibre Stress</text>
<text x="455" y="39" font-size="10px" fill="#000000" stroke="#000000" stroke-width="0.15">STANDARD</text>
<text x="538" y="39" font-size="10px" fill="#FFFFFF" stroke="#FFFFFF" stroke-width="0.35">MAX</text>
<text x="538" y="317" font-size="10px" fill="#FFFFFF" stroke="#FFFFFF" stroke-width="0.35">MIN</text>
<text x="566" y="41" font-size="10px" fill="#FFFFFF" stroke="#FFFFFF" stroke-width="0.35">7.963E+00</text>
<text x="566" y="55" font-size="10px" fill="#FFFFFF" stroke="#FFFFFF" stroke-width="0.35">7.432E+00</text>
<text x="566" y="73" font-size="10px" fill="#FFFFFF" stroke="#FFFFFF" stroke-width="0.35">6.369E+00</text>
<text x="566" y="91" font-size="10px" fill="#FFFFFF" stroke="#FFFFFF" stroke-width="0.35">5.306E+00</text>
<text x="566" y="108" font-size="10px" fill="#FFFFFF" stroke="#FFFFFF" stroke-width="0.35">4.243E+00</text>
<text x="566" y="126" font-size="10px" fill="#FFFFFF" stroke="#FFFFFF" stroke-width="0.35">3.180E+00</text>
<text x="566" y="144" font-size="10px" fill="#FFFFFF" stroke="#FFFFFF" stroke-width="0.35">2.117E+00</text>
<text x="566" y="161" font-size="10px" fill="#FFFFFF" stroke="#FFFFFF" stroke-width="0.35">1.054E+00</text>
<text x="560" y="179" font-size="10px" fill="#FFFFFF" stroke="#FFFFFF" stroke-width="0.35">-8.785E-03</text>
<text x="560" y="197" font-size="10px" fill="#FFFFFF" stroke="#FFFFFF" stroke-width="0.35">-1.071E+00</text>
<text x="560" y="215" font-size="10px" fill="#FFFFFF" stroke="#FFFFFF" stroke-width="0.35">-2.134E+00</text>
<text x="560" y="233" font-size="10px" fill="#FFFFFF" stroke="#FFFFFF" stroke-width="0.35">-3.197E+00</text>
<text x="560" y="250" font-size="10px" fill="#FFFFFF" stroke="#FFFFFF" stroke-width="0.35">-4.260E+00</text>
<text x="560" y="268" font-size="10px" fill="#FFFFFF" stroke="#FFFFFF" stroke-width="0.35">-5.323E+00</text>
<text x="560" y="286" font-size="10px" fill="#FFFFFF" stroke="#FFFFFF" stroke-width="0.35">-6.386E+00</text>
<text x="560" y="303" font-size="10px" fill="#FFFFFF" stroke="#FFFFFF" stroke-width="0.35">-7.449E+00</text>
<text x="560" y="317" font-size="10px" fill="#FFFFFF" stroke="#FFFFFF" stroke-width="0.35">-7.981E+00</text>
<text x="510" y="73" font-size="10px" fill="#555555" stroke="#555555" stroke-width="0.15">100</text>
<text x="516" y="126" font-size="10px" fill="#555555" stroke="#555555" stroke-width="0.15">75</text>
<text x="516" y="179" font-size="10px" fill="#555555" stroke="#555555" stroke-width="0.15">50</text>
<text x="516" y="232" font-size="10px" fill="#555555" stroke="#555555" stroke-width="0.15">25</text>
<text x="522" y="285" font-size="10px" fill="#555555" stroke="#555555" stroke-width="0.15">0</text>
<text x="456" y="347" font-size="13.333px" font-weight="bold" fill="#000000">LINEAR STATIC</text>
<text x="456" y="361" font-size="13.333px" font-weight="bold" fill="#000000">Load Case</text>
<text x="560" y="361" font-size="13.333px" font-weight="bold" fill="#555555">1</text>
<text x="464" y="403" font-size="13.333px" font-weight="bold" fill="#555555">RX</text>
<text x="464" y="417" font-size="13.333px" font-weight="bold" fill="#555555">RY</text>
<text x="464" y="431" font-size="13.333px" font-weight="bold" fill="#555555">RZ</text>
<text x="464" y="445" font-size="13.333px" font-weight="bold" fill="#555555">DS</text>
<text x="512" y="403" font-size="13.333px" stroke="#555555" stroke-width="0.5" fill="#555555">0.0</text>
<text x="512" y="417" font-size="13.333px" stroke="#555555" stroke-width="0.5" fill="#555555">0.0</text>
<text x="512" y="431" font-size="13.333px" stroke="#555555" stroke-width="0.5" fill="#555555">0.0</text>
<text x="496" y="445" font-size="13.333px" stroke="#555555" stroke-width="0.5" fill="#555555">2.0E+00%</text>
<text x="574" y="407" font-size="10px" fill="#FFFFFF" stroke="#FFFFFF" stroke-width="0.35">Y</text>
<text x="574" y="442" font-size="10px" fill="#FFFFFF" stroke="#FFFFFF" stroke-width="0.35">Z</text>
<text x="607" y="442" font-size="10px" fill="#FFFFFF" stroke="#FFFFFF" stroke-width="0.35">X</text>
<text x="456" y="375" font-size="13.333px" font-weight="bold"><tspan fill="#AA0000">V</tspan><tspan fill="#000000">iew</tspan></text>
<text x="504" y="375" font-size="13.333px" font-weight="bold"><tspan fill="#AA0000">R</tspan><tspan fill="#000000">ange</tspan></text>
<text x="560" y="375" font-size="13.333px" font-weight="bold"><tspan fill="#000000">t</tspan><tspan fill="#AA0000">Y</tspan><tspan fill="#000000">pe</tspan></text>
<text x="608" y="375" font-size="13.333px" font-weight="bold"><tspan fill="#AA0000">O</tspan><tspan fill="#000000">pt</tspan></text>
</g>
</svg></body></html>
